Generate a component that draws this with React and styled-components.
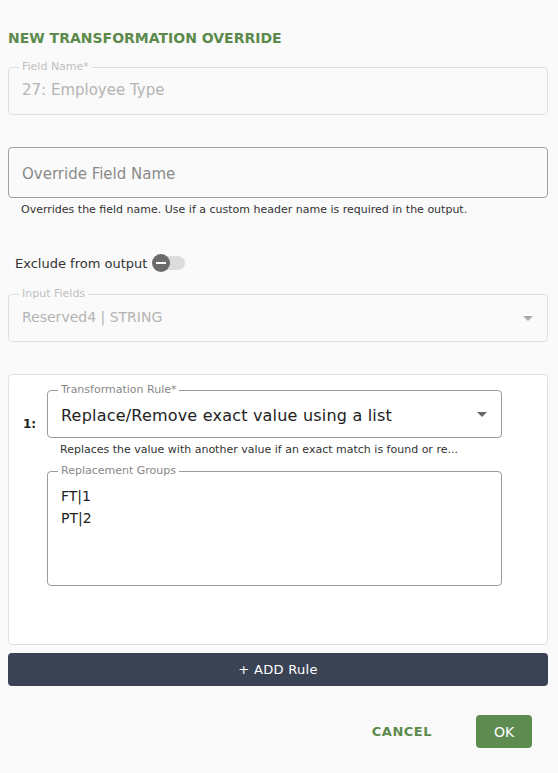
import React from 'react';
import styled, { createGlobalStyle } from 'styled-components';

const green = '#5b8a4c';

const GlobalStyle = createGlobalStyle`
  body {
    margin: 0;
    background: #fafafa;
    font-family: "DejaVu Sans", "Open Sans", sans-serif;
    color: #333;
  }
`;

const DropArrow = ({ color }) => (
  <svg width="24" height="24" viewBox="0 0 24 24">
    <path d="M7 10l5 5 5-5z" fill={color} />
  </svg>
);

const App = () => (
  <>
    <GlobalStyle />
    <Page>
      <Title>NEW TRANSFORMATION OVERRIDE</Title>

      <Outlined disabled>
        <Legend disabled>Field Name*</Legend>
        <Value disabled wide>27: Employee Type</Value>
      </Outlined>

      <TextBox>
        <Placeholder>Override Field Name</Placeholder>
      </TextBox>
      <Helper>Overrides the field name. Use if a custom header name is required in the output.</Helper>

      <SwitchRow>
        <span>Exclude from output</span>
        <Switch>
          <Thumb />
        </Switch>
      </SwitchRow>

      <Outlined disabled>
        <Legend disabled>Input Fields</Legend>
        <SelectValue>
          <Value disabled>Reserved4 | STRING</Value>
          <DropArrow color="#aaa" />
        </SelectValue>
      </Outlined>

      <RuleCard>
        <RuleRow>
          <RuleIndex>1:</RuleIndex>
          <RuleFields>
            <Outlined dark>
              <Legend>Transformation Rule*</Legend>
              <SelectValue>
                <Value large>Replace/Remove exact value using a list</Value>
                <DropArrow color="#666" />
              </SelectValue>
            </Outlined>
            <Helper>Replaces the value with another value if an exact match is found or re...</Helper>
            <Outlined dark tall>
              <Legend>Replacement Groups</Legend>
              <Lines>
                <div>FT|1</div>
                <div>PT|2</div>
              </Lines>
            </Outlined>
          </RuleFields>
        </RuleRow>
      </RuleCard>

      <AddButton>+ ADD Rule</AddButton>

      <Footer>
        <TextButton>CANCEL</TextButton>
        <OkButton>OK</OkButton>
      </Footer>
    </Page>
  </>
);
export default App;

const Page = styled.div`
  width: 540px;
  margin-left: 8px;
  padding-top: 29px;
`;

const Title = styled.h2`
  margin: 0 0 14px;
  font-size: 14px;
  line-height: 18px;
  font-weight: 700;
  color: ${green};
`;

const Outlined = styled.fieldset`
  margin: 0;
  padding: 0 13px;
  border: 1px solid ${({ disabled, dark }) => (dark ? '#9a9a9a' : disabled ? '#e0e0e0' : '#ccc')};
  border-radius: 4px;
  min-width: 0;
  min-height: ${({ tall }) => (tall ? '121px' : 'auto')};
  box-sizing: border-box;
`;

const Legend = styled.legend`
  margin-left: -3px;
  padding: 0 3px;
  font-size: 11px;
  line-height: 12px;
  color: ${({ disabled }) => (disabled ? '#c0c0c0' : '#888')};
`;

const Value = styled.div`
  font-size: ${({ large, wide }) => (large ? '16px' : wide ? '15px' : '14px')};
  letter-spacing: ${({ large }) => (large ? '0.2px' : '0')};
  line-height: 20px;
  color: ${({ disabled }) => (disabled ? '#b4b4b4' : '#222')};
  padding: ${({ large }) => (large ? '10px 0 11px' : '7px 0 14px')};
`;

const SelectValue = styled.div`
  display: flex;
  align-items: center;
  justify-content: space-between;
  margin-right: -6px;

  svg {
    margin-top: -6px;
  }
`;

const TextBox = styled.div`
  margin-top: 32px;
  height: 51px;
  box-sizing: border-box;
  border: 1px solid #a0a0a0;
  border-radius: 4px;
  padding: 0 13px;
  display: flex;
  align-items: center;
`;

const Placeholder = styled.span`
  font-size: 15px;
  color: #8a8a8a;
  padding-top: 2px;
`;

const Helper = styled.p`
  margin: 5px 0 0 13px;
  font-size: 11px;
  line-height: 14px;
  color: #333;
`;

const SwitchRow = styled.div`
  margin: 36px 0 15px 7px;
  display: flex;
  align-items: center;
  height: 20px;
  font-size: 13px;
  color: #333;
`;

const Switch = styled.div`
  position: relative;
  width: 30px;
  height: 14px;
  margin-left: 8px;
  border-radius: 7px;
  background: #dcdcdc;
`;

const Thumb = styled.div`
  position: absolute;
  left: -3px;
  top: -2px;
  width: 18px;
  height: 18px;
  border-radius: 50%;
  background: #6b6b6b;

  &::after {
    content: '';
    position: absolute;
    left: 4px;
    top: 8px;
    width: 10px;
    height: 2px;
    background: #fff;
  }
`;

const RuleCard = styled.div`
  margin-top: 32px;
  background: #fff;
  border: 1px solid #e0e0e0;
  border-radius: 4px;
  padding: 9px 0 0;
  box-sizing: border-box;
  height: 271px;
`;

const RuleRow = styled.div`
  display: flex;
  align-items: flex-start;
`;

const RuleIndex = styled.div`
  width: 38px;
  padding: 33px 0 0 14px;
  box-sizing: border-box;
  font-size: 12px;
  font-weight: 700;
  color: #222;
`;

const RuleFields = styled.div`
  width: 455px;
  display: flex;
  flex-direction: column;

  ${Helper} {
    margin-bottom: 8px;
  }
`;

const Lines = styled.div`
  padding-top: 8px;
  font-size: 14px;
  line-height: 22px;
  color: #222;
`;

const AddButton = styled.button`
  display: block;
  width: 100%;
  margin-top: 8px;
  height: 33px;
  border: none;
  border-radius: 4px;
  background: #3a4354;
  color: #fff;
  font-family: inherit;
  font-size: 13px;
  letter-spacing: 0.3px;
`;

const Footer = styled.div`
  margin-top: 29px;
  display: flex;
  justify-content: flex-end;
  align-items: center;
  gap: 44px;
  padding-right: 16px;
`;

const TextButton = styled.button`
  border: none;
  background: none;
  padding: 0;
  font-family: inherit;
  font-size: 13px;
  font-weight: 700;
  letter-spacing: 0.5px;
  color: ${green};
`;

const OkButton = styled.button`
  width: 56px;
  height: 33px;
  border: none;
  border-radius: 4px;
  background: #5e8b50;
  color: #fff;
  font-family: inherit;
  font-size: 14px;
`;
